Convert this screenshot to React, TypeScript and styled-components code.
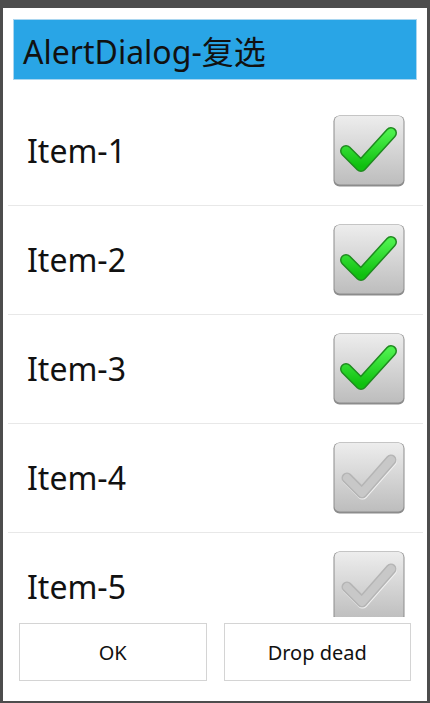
import React from "react";
import styled, { createGlobalStyle } from "styled-components";

const Global = createGlobalStyle`
  html, body { margin: 0; padding: 0; background: #4d4d4d; }
  body { font-family: "Noto Sans", "Noto Sans CJK SC", sans-serif; }
`;

const Screen = styled.div`
  width: 430px;
  height: 703px;
  box-sizing: border-box;
  padding: 8px 3px 2px 3px;
  background: #4d4d4d;
  display: flex;
`;

const Dialog = styled.div`
  flex: 1;
  background: #ffffff;
  display: flex;
  flex-direction: column;
`;

const TitleWrap = styled.div`
  padding: 11px 10px 0 10px;
`;

const Title = styled.div`
  height: 61px;
  box-sizing: border-box;
  background: #29a5e6;
  border: 1px solid #a9d6f0;
  display: flex;
  align-items: center;
  padding-left: 9px;
  font-size: 32px;
  color: #111;
  font-family: "Noto Sans", "Noto Sans CJK SC", sans-serif;
`;

const List = styled.div`
  margin: 17px 4px 0 5px;
  height: 520px;
  overflow: hidden;
`;

const Row = styled.div`
  height: 108px;
  border-bottom: 1px solid #e8e8e8;
  display: flex;
  align-items: center;
  justify-content: space-between;
  padding: 0 18px 0 19px;
`;

const Label = styled.span`
  font-size: 32px;
  color: #111;
  padding-bottom: 1px;
`;

const Buttons = styled.div`
  display: flex;
  gap: 17px;
  padding: 6px 16px 20px 16px;
`;

const Button = styled.button`
  flex: 1;
  height: 58px;
  background: #fff;
  border: 1px solid #d4d4d4;
  font-family: "Noto Sans", sans-serif;
  font-size: 20px;
  color: #111;
  padding: 0;
`;

const CheckBox: React.FC<{ checked: boolean; id: number }> = ({ checked, id }) => (
  <svg width="72" height="72" viewBox="0 0 72 72">
    <defs>
      <linearGradient id={`bg${id}`} x1="0" y1="0" x2="0" y2="1">
        <stop offset="0" stopColor="#ededed" />
        <stop offset="1" stopColor="#bdbdbd" />
      </linearGradient>
      <linearGradient id={`g${id}`} x1="0" y1="0" x2="0" y2="1">
        <stop offset="0" stopColor="#4cf04c" />
        <stop offset="1" stopColor="#10c010" />
      </linearGradient>
    </defs>
    <rect x="0.5" y="0.5" width="71" height="71" rx="6" fill="#8c8c8c" />
    <rect x="1.5" y="1" width="69" height="68.5" rx="5" fill={`url(#bg${id})`} />
    {checked ? (
      <>
        <path d="M13 36 L28 51 L58 18" fill="none" stroke="#1f8a1f" strokeWidth="12" strokeLinecap="round" strokeLinejoin="round" />
        <path d="M13 36 L28 51 L58 18" fill="none" stroke={`url(#g${id})`} strokeWidth="9" strokeLinecap="round" strokeLinejoin="round" />
      </>
    ) : (
      <>
        <path d="M14 36 L29 51 L58 18" fill="none" stroke="#f2f2f2" strokeWidth="11" strokeLinecap="round" strokeLinejoin="round" transform="translate(0.5,1)" />
        <path d="M14 36 L29 51 L58 18" fill="none" stroke="#b5b5b5" strokeWidth="11" strokeLinecap="round" strokeLinejoin="round" />
        <path d="M14 36 L29 51 L58 18" fill="none" stroke="#c8c8c8" strokeWidth="8" strokeLinecap="round" strokeLinejoin="round" />
      </>
    )}
  </svg>
);

const items = [
  { label: "Item-1", checked: true },
  { label: "Item-2", checked: true },
  { label: "Item-3", checked: true },
  { label: "Item-4", checked: false },
  { label: "Item-5", checked: false },
];

export default function App() {
  return (
    <>
      <Global />
      <Screen>
        <Dialog>
          <TitleWrap>
            <Title>AlertDialog-复选</Title>
          </TitleWrap>
          <List>
            {items.map((it, i) => (
              <Row key={it.label}>
                <Label>{it.label}</Label>
                <CheckBox checked={it.checked} id={i} />
              </Row>
            ))}
          </List>
          <Buttons>
            <Button>OK</Button>
            <Button>Drop dead</Button>
          </Buttons>
        </Dialog>
      </Screen>
    </>
  );
}
